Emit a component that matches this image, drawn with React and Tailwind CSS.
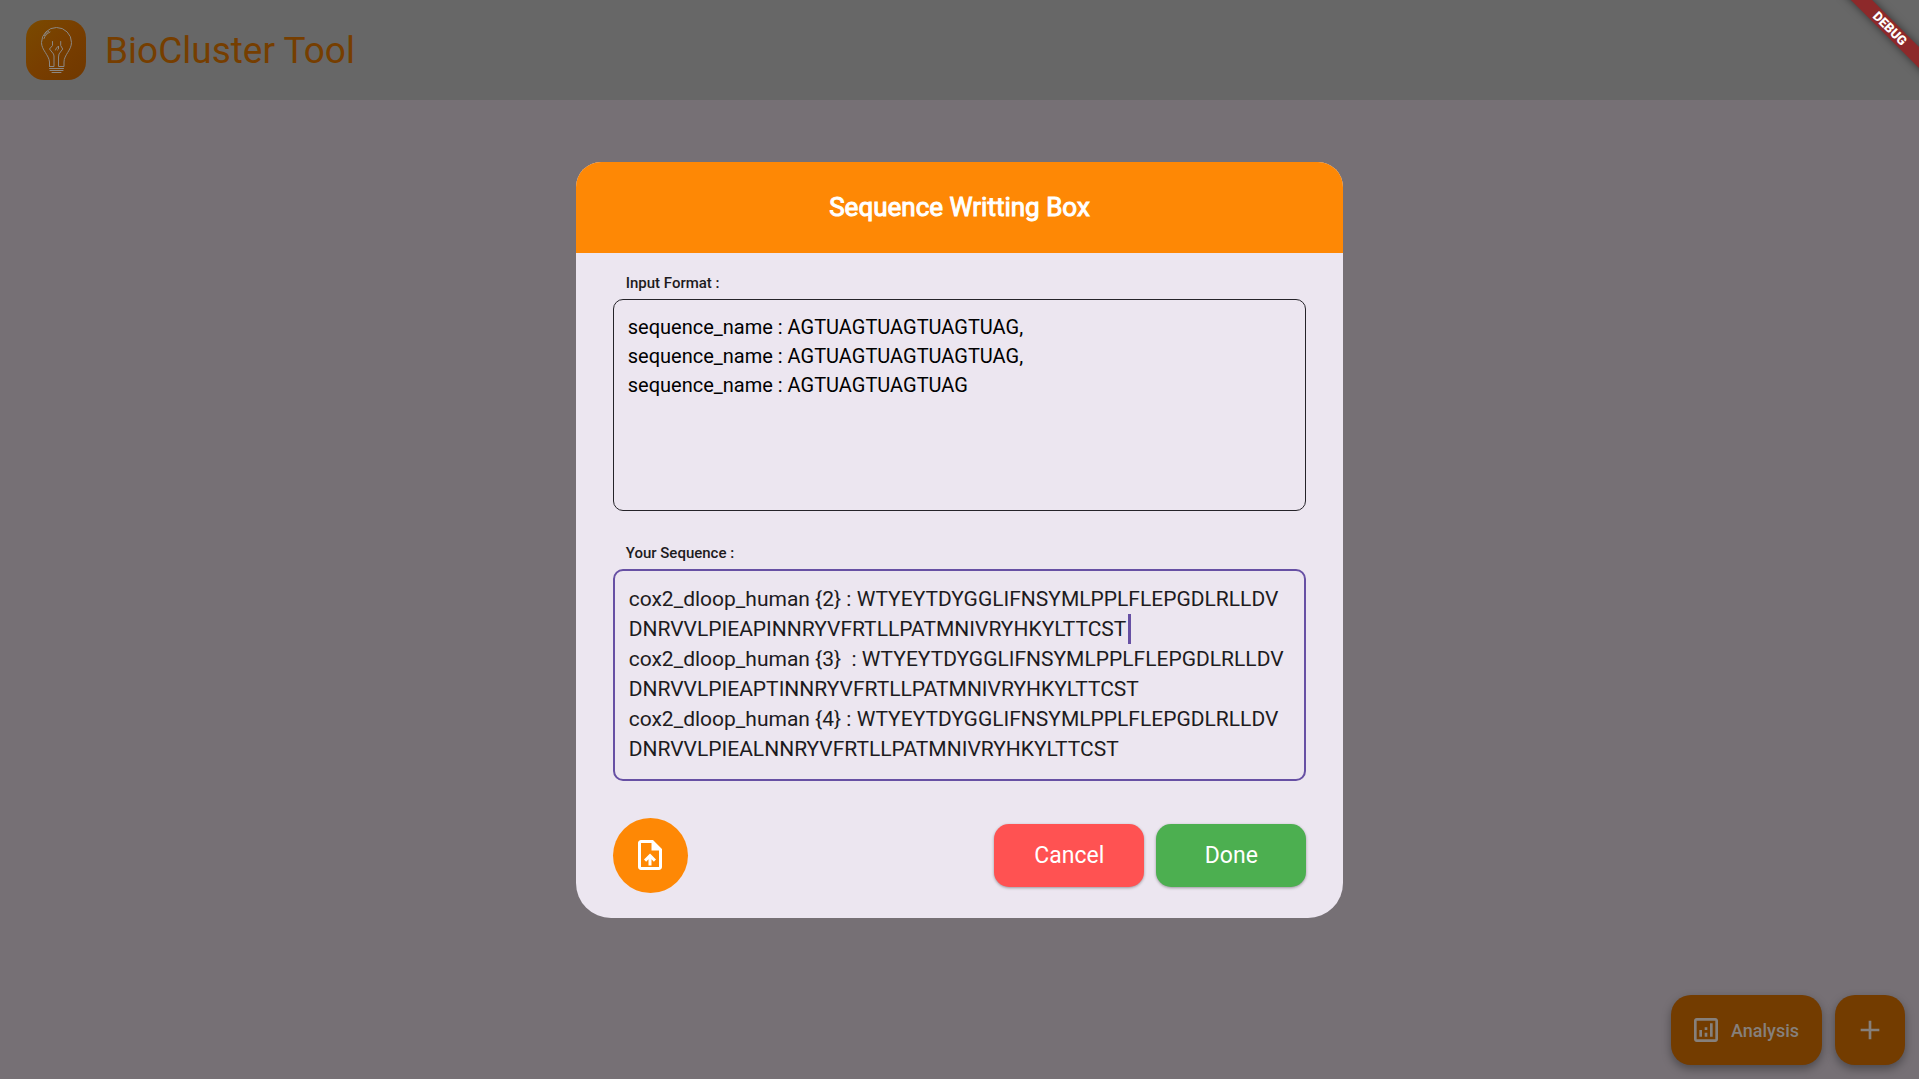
import React from "react";
import { MdAdd, MdOutlineAnalytics, MdOutlineUploadFile } from "react-icons/md";

const FORMAT_SAMPLE = `sequence_name : AGTUAGTUAGTUAGTUAG,
sequence_name : AGTUAGTUAGTUAGTUAG,
sequence_name : AGTUAGTUAGTUAG`;

const SEQUENCES = `cox2_dloop_human {2} : WTYEYTDYGGLIFNSYMLPPLFLEPGDLRLLDVDNRVVLPIEAPINNRYVFRTLLPATMNIVRYHKYLTTCST
cox2_dloop_human {3}  : WTYEYTDYGGLIFNSYMLPPLFLEPGDLRLLDVDNRVVLPIEAPTINNRYVFRTLLPATMNIVRYHKYLTTCST
cox2_dloop_human {4} : WTYEYTDYGGLIFNSYMLPPLFLEPGDLRLLDVDNRVVLPIEALNNRYVFRTLLPATMNIVRYHKYLTTCST`;

function BulbLogo() {
  return (
    <div className="flex size-[60px] items-center justify-center rounded-[18px] bg-linear-to-br from-[#7a4a00] via-[#783e00] to-[#703800]">
      <svg viewBox="0 0 60 60" className="size-full" fill="none" stroke="#8c8782" strokeWidth="1" strokeLinecap="round" strokeLinejoin="round" aria-hidden="true">
        <path d="M23.500 46.500V42C23 35 15.500 30 15.500 22.500a15 15 0 0 1 30 0C45.500 30 38 35 38 42v4.500h-5.500V37l.5-3 3.700-5-2-3.500V21.500" />
        <path d="M23.500 46.500h4.500V36l-.5-2-4-5 3-3.500V21.500M29.500 30l1-2 2-2v3l-1 1" />
        <path d="M18 18.500c1-3 3-5 6-6.500M18.500 15.500c1-2 2-3 4-4" />
        <path d="M23.500 48.500h14M24 50.500h13M26 52.500h9" />
      </svg>
    </div>
  );
}

function DebugBanner() {
  return (
    <div className="pointer-events-none absolute top-0 right-0 size-[100px] overflow-hidden">
      <div className="absolute top-[21px] right-[-31px] flex h-[15px] w-[120px] rotate-45 items-center justify-center bg-[#8d292a] text-[13px] leading-[15px] font-black text-white shadow-[0_0_8px_rgba(0,0,0,0.5)]">
        DEBUG
      </div>
    </div>
  );
}

function SequenceDialog() {
  return (
    <section role="dialog" aria-labelledby="dialog-title" className="w-2/5 overflow-hidden rounded-t-[25px] rounded-b-[35px] bg-[#ece6f0]">
      <header className="flex h-[91px] items-center justify-center bg-[#fe8805]">
        <h2 id="dialog-title" className="text-[26px] font-normal text-white [-webkit-text-stroke:1px_white]">Sequence Writting Box</h2>
      </header>
      <form className="flex flex-col px-[37px] pt-5 pb-[25px]" onSubmit={(e) => e.preventDefault()}>
        <label htmlFor="format" className="mb-1.5 ml-[13px] text-[15px] leading-5 font-medium text-[#1d1b20]">Input Format :</label>
        <textarea
          id="format"
          readOnly
          spellCheck={false}
          defaultValue={FORMAT_SAMPLE}
          className="block h-[212px] w-full resize-none overflow-hidden rounded-[10px] border border-[#252329] px-[14px] pt-[13px] text-[20px] leading-[29px] text-black outline-none"
        />
        <label htmlFor="sequence" className="mt-8 mb-1.5 ml-[13px] text-[15px] leading-5 font-medium text-[#1d1b20]">Your Sequence :</label>
        <div className="relative">
          <textarea
            id="sequence"
            spellCheck={false}
            defaultValue={SEQUENCES}
            className="block h-[212px] w-full resize-none overflow-hidden rounded-[10px] border-2 border-[#6750a4] px-[14px] pt-[13px] text-[21px] leading-[30px] break-all whitespace-pre-wrap text-[#1d1b20] outline-none"
          />
          <span aria-hidden="true" className="absolute top-[45px] left-[515px] h-[30px] w-[3px] bg-[#6750a4]" />
        </div>
        <div className="mt-[37px] flex items-center gap-3">
          <button type="button" aria-label="Upload file" className="mr-auto flex size-[75px] items-center justify-center rounded-full bg-[#fe8805] text-white">
            <MdOutlineUploadFile size={36} />
          </button>
          <button type="button" className="h-[63px] w-[150px] rounded-[15px] bg-[#ff5252] pt-0.5 text-[23px] text-white shadow-[0_1px_3px_rgba(0,0,0,0.35)]">Cancel</button>
          <button type="submit" className="h-[63px] w-[150px] rounded-[15px] bg-[#4caf50] pt-0.5 text-[23px] text-white shadow-[0_1px_3px_rgba(0,0,0,0.35)]">Done</button>
        </div>
      </form>
    </section>
  );
}

export default function App() {
  return (
    <div className="relative flex min-h-screen flex-col bg-[#767075] font-[Roboto,sans-serif]">
      <header className="flex h-[100px] items-center gap-[19px] bg-[#676767] px-[26px]">
        <BulbLogo />
        <h1 className="pt-0.5 text-[37px] leading-[48px] text-[#763e00]">BioCluster Tool</h1>
      </header>
      <div className="absolute right-[14px] bottom-[14px] flex gap-[13px] text-[#86807c]">
        <button type="button" className="flex h-[70px] w-[151px] items-center gap-[9px] rounded-[20px] bg-[#733c00] pl-[19px] text-[18px] font-medium shadow-[0_4px_10px_rgba(0,0,0,0.35)]">
          <MdOutlineAnalytics size={32} />
          Analysis
        </button>
        <button type="button" aria-label="Add" className="flex size-[70px] items-center justify-center rounded-[20px] bg-[#733c00] shadow-[0_4px_10px_rgba(0,0,0,0.35)]">
          <MdAdd size={32} />
        </button>
      </div>
      <div className="absolute inset-0 flex items-center justify-center">
        <SequenceDialog />
      </div>
      <DebugBanner />
    </div>
  );
}
